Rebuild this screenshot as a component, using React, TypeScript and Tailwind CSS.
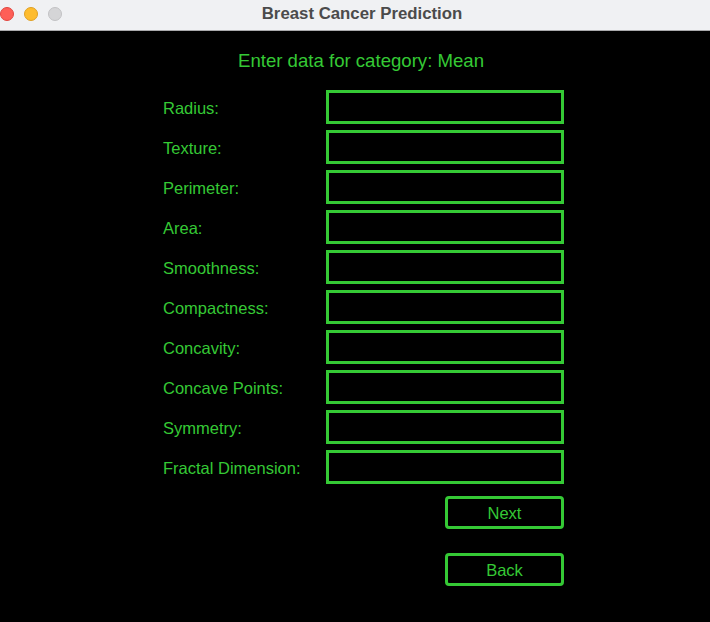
import React from 'react';

const fields = [
  "Radius:",
  "Texture:",
  "Perimeter:",
  "Area:",
  "Smoothness:",
  "Compactness:",
  "Concavity:",
  "Concave Points:",
  "Symmetry:",
  "Fractal Dimension:",
];

const App: React.FC = () => {
  return (
    <div className="w-[710px] h-[622px] bg-black flex flex-col overflow-hidden" style={{ fontFamily: '"Liberation Sans", Arial, sans-serif' }}>
      {/* title bar */}
      <div className="relative h-[31px] shrink-0 bg-[#f0f1f3] border-b border-[#a9a9ab] flex items-center justify-center">
        <div className="absolute left-0 top-[7px] flex gap-[10px]">
          <span className="w-[14px] h-[14px] rounded-full bg-[#fe5f57] border border-[#e2463f]" />
          <span className="w-[14px] h-[14px] rounded-full bg-[#febc2e] border border-[#dfa023]" />
          <span className="w-[14px] h-[14px] rounded-full bg-[#d5d5d7] border border-[#c2c2c4]" />
        </div>
        <span className="text-[16.8px] font-bold text-[#4b4b4b] ml-[14px] -mt-[2px]">Breast Cancer Prediction</span>
      </div>

      <div className="flex flex-col">
        <h1 className="mt-[18px] h-[24px] leading-[24px] text-center text-[18.6px] text-[#35c935] pl-[12px]">
          Enter data for category: Mean
        </h1>

        <div className="mt-[17px] ml-[163px] grid grid-cols-[163px_238px] gap-y-[6px]">
          {fields.map((label) => (
            <React.Fragment key={label}>
              <div className="h-[34px] flex items-center pt-[2px] text-[16.5px] text-[#35c935]">{label}</div>
              <div className="h-[34px] border-[3px] border-[#35c935] bg-black" />
            </React.Fragment>
          ))}
        </div>

        <div className="ml-[445px] mt-[12px] flex flex-col gap-[24px]">
          <button className="w-[119px] h-[33px] border-[3px] border-[#35c935] rounded-[4px] bg-black text-[#35c935] text-[16.5px] flex items-center justify-center pt-[1px]">
            Next
          </button>
          <button className="w-[119px] h-[33px] border-[3px] border-[#35c935] rounded-[4px] bg-black text-[#35c935] text-[16.5px] flex items-center justify-center pt-[1px]">
            Back
          </button>
        </div>
      </div>
    </div>
  );
};

export default App;
